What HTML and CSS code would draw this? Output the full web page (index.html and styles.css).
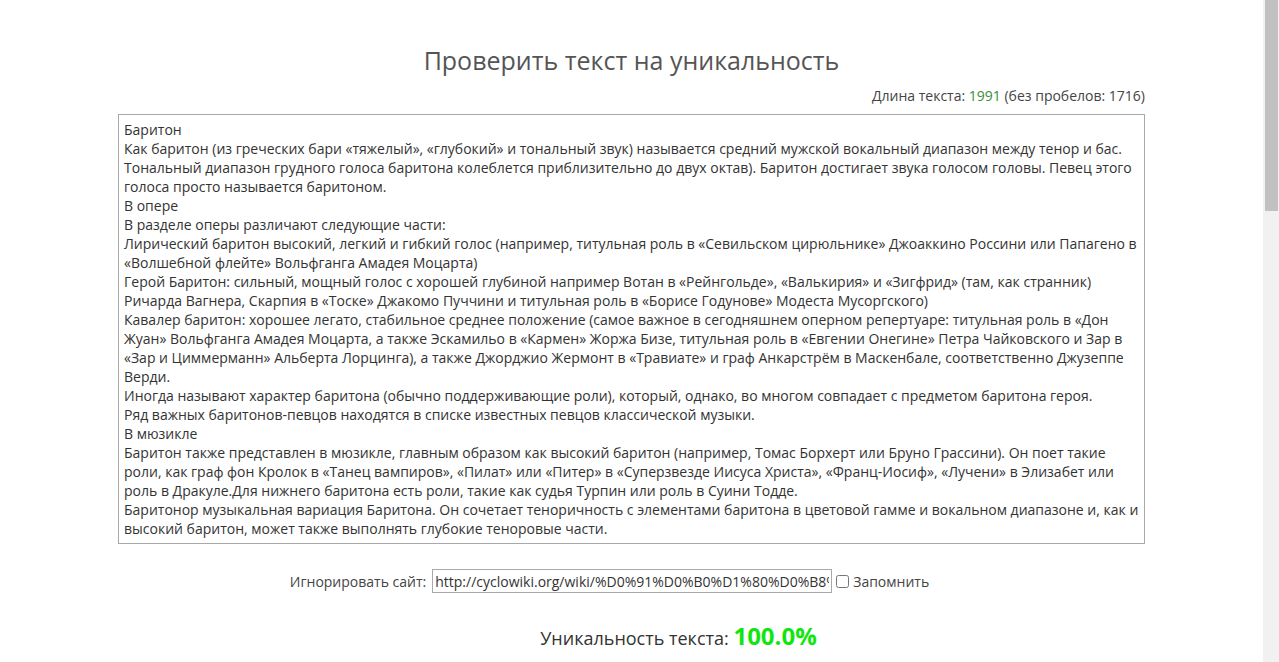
FILE: index.html
```html
<!DOCTYPE html>
<html lang="ru">
<head>
<meta charset="utf-8">
<title>Проверить текст на уникальность</title>
<link rel="stylesheet" href="styles.css">
</head>
<body>
<main class="page">
  <h1 class="title">Проверить текст на уникальность</h1>
  <div class="length">Длина текста: <span class="num">1991</span> (без пробелов: 1716)</div>
  <textarea class="source" spellcheck="false">Баритон
Как баритон (из греческих бари «тяжелый», «глубокий» и тональный звук) называется средний мужской вокальный диапазон между тенор и бас. Тональный диапазон грудного голоса баритона колеблется приблизительно до двух октав). Баритон достигает звука голосом головы. Певец этого голоса просто называется баритоном.
В опере
В разделе оперы различают следующие части:
Лирический баритон высокий, легкий и гибкий голос (например, титульная роль в «Севильском цирюльнике» Джоаккино Россини или Папагено в «Волшебной флейте» Вольфганга Амадея Моцарта)
Герой Баритон: сильный, мощный голос с хорошей глубиной например Вотан в «Рейнгольде», «Валькирия» и «Зигфрид» (там, как странник) Ричарда Вагнера, Скарпия в «Тоске» Джакомо Пуччини и титульная роль в «Борисе Годунове» Модеста Мусоргского)
Кавалер баритон: хорошее легато, стабильное среднее положение (самое важное в сегодняшнем оперном репертуаре: титульная роль в «Дон Жуан» Вольфганга Амадея Моцарта, а также Эскамильо в «Кармен» Жоржа Бизе, титульная роль в «Евгении Онегине» Петра Чайковского и Зар в «Зар и Циммерманн» Альберта Лорцинга), а также Джорджио Жермонт в «Травиате» и граф Анкарстрём в Маскенбале, соответственно Джузеппе Верди.
Иногда называют характер баритона (обычно поддерживающие роли), который, однако, во многом совпадает с предметом баритона героя.
Ряд важных баритонов-певцов находятся в списке известных певцов классической музыки.
В мюзикле
Баритон также представлен в мюзикле, главным образом как высокий баритон (например, Томас Борхерт или Бруно Грассини). Он поет такие роли, как граф фон Кролок в «Танец вампиров», «Пилат» или «Питер» в «Суперзвезде Иисуса Христа», «Франц-Иосиф», «Лучени» в Элизабет или роль в Дракуле.Для нижнего баритона есть роли, такие как судья Турпин или роль в Суини Тодде.
Баритонор музыкальная вариация Баритона. Он сочетает теноричность с элементами баритона в цветовой гамме и вокальном диапазоне и, как и высокий баритон, может также выполнять глубокие теноровые части.</textarea>
  <div class="ignore">
    <label class="ignore-label" for="site">Игнорировать сайт:</label>
    <input class="site" id="site" type="text" value="http://cyclowiki.org/wiki/%D0%91%D0%B0%D1%80%D0%B8%D1%82%D0%BE%D0%BD">
    <input class="remember" id="remember" type="checkbox">
    <label class="remember-label" for="remember">Запомнить</label>
  </div>
  <div class="result">Уникальность текста: <span class="percent">100.0%</span></div>
</main>
<div class="scrollbar" aria-hidden="true"><div class="scrollbar-thumb"></div></div>
</body>
</html>
```

FILE: styles.css
```css
html, body {
  overflow: hidden;
}
body {
  margin: 0;
  padding-right: 16px;
  font-family: "Open Sans", "Liberation Sans", sans-serif;
  font-size: 14px;
  color: #333;
  background: #fff;
}
.page {
  width: 1027px;
  margin: 0 auto;
  padding-top: 44px;
}
.title {
  margin: 0;
  font-size: 25px;
  font-weight: 400;
  line-height: 33px;
  color: #555;
  text-align: center;
}
.length {
  margin-top: 9px;
  line-height: 19px;
  text-align: right;
  color: #444;
}
.num {
  color: #3c8c3c;
}
.source {
  display: block;
  box-sizing: border-box;
  width: 1027px;
  height: 430px;
  margin: 9px 0 0;
  padding: 5px 5px 5px;
  border: 1px solid #a9a9a9;
  font-family: "Open Sans", "Liberation Sans", sans-serif;
  font-size: 14px;
  line-height: 19px;
  color: #333;
  resize: none;
  overflow: hidden;
  outline: none;
}
.ignore {
  display: flex;
  align-items: center;
  justify-content: center;
  margin-top: 25px;
  padding-right: 44px;
  height: 24px;
  color: #444;
}
.ignore-label {
  margin-right: 6px;
}
.site {
  box-sizing: border-box;
  width: 400px;
  height: 24px;
  padding: 1px 2px;
  border: 1px solid #a9a9a9;
  font-family: "Open Sans", "Liberation Sans", sans-serif;
  font-size: 14px;
  color: #333;
}
.remember {
  width: 13px;
  height: 13px;
  margin: 0 4px 0 4px;
}
.result {
  margin-top: 26px;
  padding-left: 94px;
  text-align: center;
  font-size: 18px;
  line-height: 33px;
  color: #333;
}
.percent {
  font-size: 24px;
  font-weight: 700;
  color: #0fe60f;
}
.scrollbar {
  position: fixed;
  top: 0;
  right: 0;
  width: 16px;
  height: 100vh;
  background: #f1f1f1;
}
.scrollbar-thumb {
  margin: 0 1px 0 2px;
  height: 211px;
  background: #c1c1c1;
}
```
